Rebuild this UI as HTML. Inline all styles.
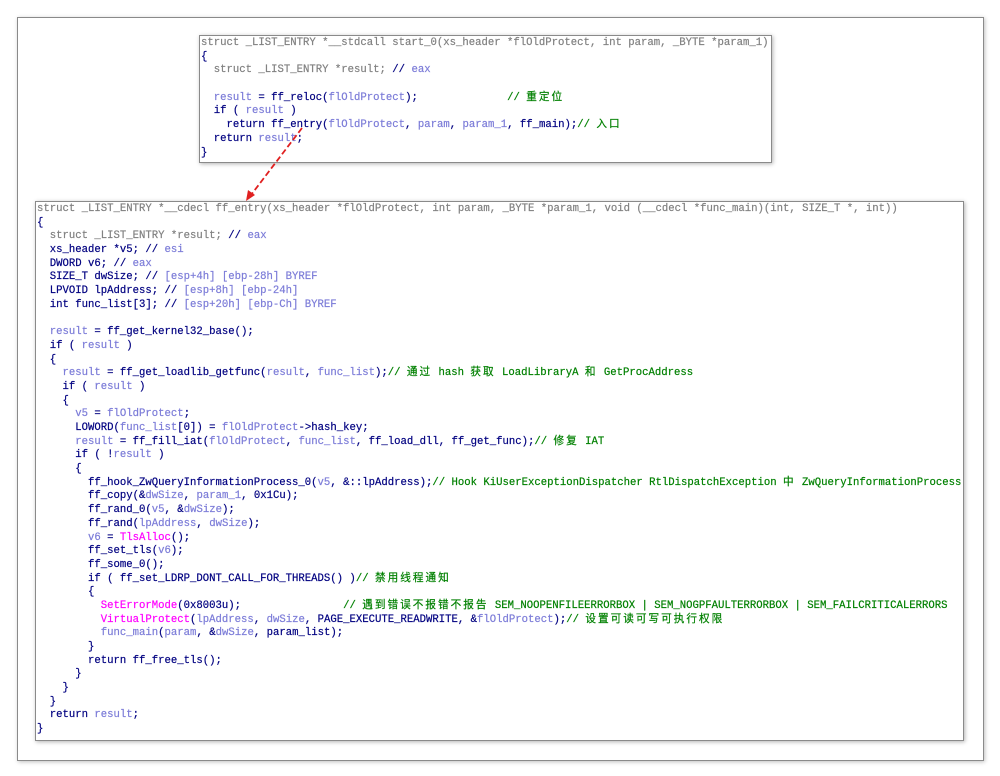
<!DOCTYPE html>
<html><head><meta charset="utf-8"><style>
html,body{margin:0;padding:0;background:#fff;width:1000px;height:776px;overflow:hidden;position:relative}
.frame{position:absolute;left:17px;top:17px;width:965px;height:742px;border:1px solid #8a8a8a;box-shadow:1px 1px 4px rgba(0,0,0,.25);background:#fff}
.box{position:absolute;background:#fff;border:1px solid #8a8a8a;box-shadow:1px 1px 4px rgba(0,0,0,.3)}
pre{margin:0;font-family:"Liberation Mono","Noto Sans CJK SC",monospace;font-size:10.63px;line-height:13.68px;color:#000080;white-space:pre;-webkit-text-stroke:0.2px}
.g{color:#808080}.v{color:#7c7cd8}.m{color:#ff00ff}.c{color:#008000}
.k{letter-spacing:2px}
</style></head><body>
<div class="frame"></div>
<div class="box" style="left:199px;top:35px;width:571px;height:126px">
<pre style="padding:1px 0 0 1px"><span class="g">struct _LIST_ENTRY *__stdcall start_0(xs_header *flOldProtect, int param, _BYTE *param_1)</span>
{
  <span class="g">struct _LIST_ENTRY *result;</span> // <span class="v">eax</span>

  <span class="v">result</span> = ff_reloc(<span class="v">flOldProtect</span>);              <span class="c">// <span class="k">重定位</span></span>
  if ( <span class="v">result</span> )
    return ff_entry(<span class="v">flOldProtect</span>, <span class="v">param</span>, <span class="v">param_1</span>, ff_main);<span class="c">// <span class="k">入口</span></span>
  return <span class="v">result</span>;
}</pre></div>
<div class="box" style="left:35px;top:201px;width:927px;height:538px">
<pre style="padding:1px 0 0 1px"><span class="g">struct _LIST_ENTRY *__cdecl ff_entry(xs_header *flOldProtect, int param, _BYTE *param_1, void (__cdecl *func_main)(int, SIZE_T *, int))</span>
{
  <span class="g">struct _LIST_ENTRY *result;</span> // <span class="v">eax</span>
  xs_header *v5; // <span class="v">esi</span>
  DWORD v6; // <span class="v">eax</span>
  SIZE_T dwSize; // <span class="v">[esp+4h] [ebp-28h] BYREF</span>
  LPVOID lpAddress; // <span class="v">[esp+8h] [ebp-24h]</span>
  int func_list[3]; // <span class="v">[esp+20h] [ebp-Ch] BYREF</span>

  <span class="v">result</span> = ff_get_kernel32_base();
  if ( <span class="v">result</span> )
  {
    <span class="v">result</span> = ff_get_loadlib_getfunc(<span class="v">result</span>, <span class="v">func_list</span>);<span class="c">// <span class="k">通过</span> hash <span class="k">获取</span> LoadLibraryA <span class="k">和</span> GetProcAddress</span>
    if ( <span class="v">result</span> )
    {
      <span class="v">v5</span> = <span class="v">flOldProtect</span>;
      LOWORD(<span class="v">func_list</span>[0]) = <span class="v">flOldProtect</span>-&gt;hash_key;
      <span class="v">result</span> = ff_fill_iat(<span class="v">flOldProtect</span>, <span class="v">func_list</span>, ff_load_dll, ff_get_func);<span class="c">// <span class="k">修复</span> IAT</span>
      if ( !<span class="v">result</span> )
      {
        ff_hook_ZwQueryInformationProcess_0(<span class="v">v5</span>, &amp;::lpAddress);<span class="c">// Hook KiUserExceptionDispatcher RtlDispatchException <span class="k">中</span> ZwQueryInformationProcess</span>
        ff_copy(&amp;<span class="v">dwSize</span>, <span class="v">param_1</span>, 0x1Cu);
        ff_rand_0(<span class="v">v5</span>, &amp;<span class="v">dwSize</span>);
        ff_rand(<span class="v">lpAddress</span>, <span class="v">dwSize</span>);
        <span class="v">v6</span> = <span class="m">TlsAlloc</span>();
        ff_set_tls(<span class="v">v6</span>);
        ff_some_0();
        if ( ff_set_LDRP_DONT_CALL_FOR_THREADS() )<span class="c">// <span class="k">禁用线程通知</span></span>
        {
          <span class="m">SetErrorMode</span>(0x8003u);                <span class="c">// <span class="k">遇到错误不报错不报告</span> SEM_NOOPENFILEERRORBOX | SEM_NOGPFAULTERRORBOX | SEM_FAILCRITICALERRORS</span>
          <span class="m">VirtualProtect</span>(<span class="v">lpAddress</span>, <span class="v">dwSize</span>, PAGE_EXECUTE_READWRITE, &amp;<span class="v">flOldProtect</span>);<span class="c">// <span class="k">设置可读可写可执行权限</span></span>
          <span class="v">func_main</span>(<span class="v">param</span>, &amp;<span class="v">dwSize</span>, param_list);
        }
        return ff_free_tls();
      }
    }
  }
  return <span class="v">result</span>;
}</pre></div>
<svg style="position:absolute;left:0;top:0" width="1000" height="776">
<line x1="302" y1="128" x2="251" y2="195" stroke="#e02020" stroke-width="1.8" stroke-dasharray="6,3"/>
<polygon points="246,201 248,190 255,195" fill="#e02020"/>
</svg>
</body></html>
